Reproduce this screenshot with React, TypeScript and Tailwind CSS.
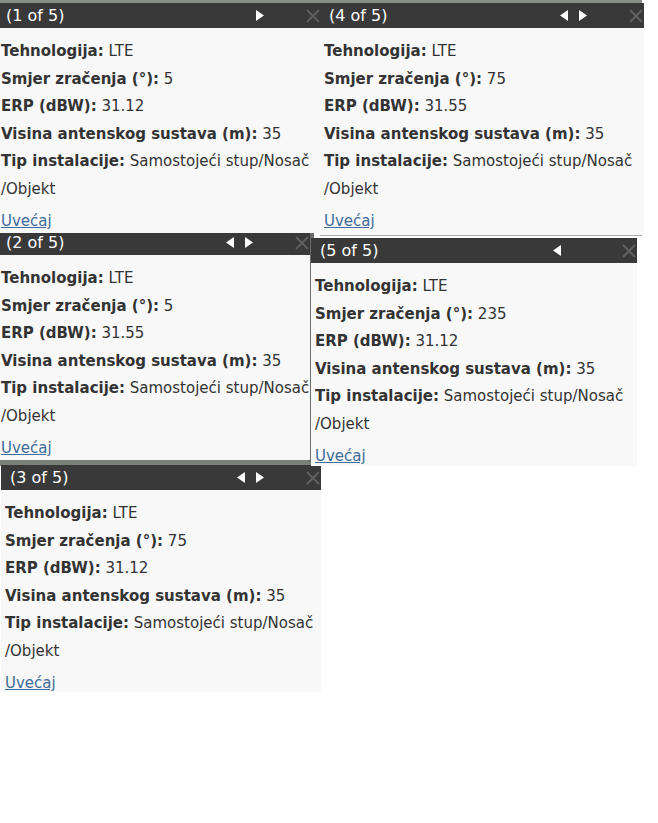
type Row = { label: string; value: string };

type PopupProps = {
  title: string;
  rows: Row[];
  prev: boolean;
  next: boolean;
  pos: string;
};

const Arrow = ({ dir, show }: { dir: 'left' | 'right'; show: boolean }) => (
  <svg width="8" height="11" viewBox="0 0 8 11" className={show ? '' : 'invisible'}>
    {dir === 'left' ? <polygon points="8,0 8,11 0,5.5" fill="#ffffff" /> : <polygon points="0,0 0,11 8,5.5" fill="#ffffff" />}
  </svg>
);

const Popup = ({ title, rows, prev, next, pos }: PopupProps) => {
  return (
    <div className={`absolute ${pos} overflow-hidden bg-[#f8f8f8]`}>
      {/* header */}
      <div className="flex items-center h-[25px] pl-[9px] bg-[#393939] text-white text-[16px]">
        <span className="flex-1 whitespace-nowrap">{title}</span>
        <div className="flex items-center gap-[11px] mr-[42px]">
          <Arrow dir="left" show={prev} />
          <Arrow dir="right" show={next} />
        </div>
        <svg width="14" height="14" viewBox="0 0 14 14" className="mr-[1px] shrink-0">
          <path d="M1 1 L13 13 M13 1 L1 13" stroke="#5f5f5f" strokeWidth="2" />
        </svg>
      </div>
      {/* body */}
      <div className="pl-[4px] pt-[10px] text-[15px] text-[#333333] leading-[27.5px]">
        {rows.map((r) => (
          <div key={r.label} className="whitespace-nowrap">
            <span className="font-bold">{r.label}:</span> {r.value}
          </div>
        ))}
        <div className="whitespace-nowrap">
          <span className="font-bold">Tip instalacije:</span> Samostojeći stup/Nosač
          <br />
          /Objekt
        </div>
        <div className="mt-[5px] leading-[26px]">
          <a href="#" className="text-[#3e6b9a] underline">Uvećaj</a>
        </div>
      </div>
    </div>
  );
};

const rowsFor = (smjer: string, erp: string): Row[] => [
  { label: 'Tehnologija', value: 'LTE' },
  { label: 'Smjer zračenja (°)', value: smjer },
  { label: 'ERP (dBW)', value: erp },
  { label: 'Visina antenskog sustava (m)', value: '35' },
];

export default function App() {
  return (
    <div className="relative w-[658px] h-[823px] bg-white overflow-hidden" style={{ fontFamily: '"DejaVu Sans", Verdana, sans-serif' }}>
      {/* bits of map showing between the popups */}
      <div className="absolute left-0 top-0 w-[642px] h-[4px] bg-[#8a8f86]" />
      <div className="absolute left-0 top-[456px] w-[322px] h-[10px] bg-[#7b8178]" />
      <div className="absolute left-[308px] top-[232px] w-[6px] h-[230px] bg-[#6a6e68]" />

      <Popup title="(3 of 5)" rows={rowsFor('75', '31.12')} prev next pos="left-[1px] top-[465px] w-[320px] h-[227px]" />
      <Popup title="(2 of 5)" rows={rowsFor('5', '31.55')} prev next pos="left-[-3px] top-[230px] w-[313px] h-[230px]" />
      <Popup title="(5 of 5)" rows={rowsFor('235', '31.12')} prev next={false} pos="left-[311px] top-[238px] w-[326px] h-[228px]" />
      <div className="absolute left-[320px] top-[235px] w-[322px] h-[1px] bg-[#a9a9a9]" />
      <Popup title="(4 of 5)" rows={rowsFor('75', '31.55')} prev next pos="left-[320px] top-[3px] w-[324px] h-[232px]" />
      <Popup title="(1 of 5)" rows={rowsFor('5', '31.12')} prev={false} next pos="left-[-3px] top-[3px] w-[324px] h-[230px]" />
    </div>
  );
}
